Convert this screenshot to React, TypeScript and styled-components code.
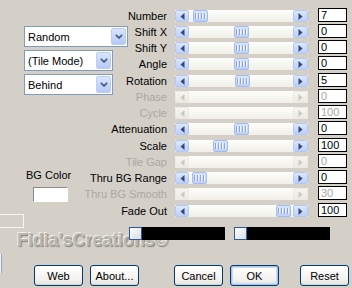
import styled, { createGlobalStyle } from "styled-components";

const GlobalStyle = createGlobalStyle`
  html, body {
    margin: 0;
    padding: 0;
    background: #d4d0c8;
  }
  body {
    width: 352px;
    height: 288px;
    overflow: hidden;
    font-family: "Liberation Sans", Arial, sans-serif;
    font-size: 11px;
    color: #000;
  }
`;

const Dialog = styled.div`
  width: 352px;
  height: 288px;
  box-sizing: border-box;
  background: #d4d0c8;
  display: flex;
  flex-direction: column;
  overflow: hidden;
`;

const ControlGrid = styled.div`
  display: grid;
  grid-template-columns: 175px 143px 29px;
  grid-template-rows: repeat(3, 16px 16px 16px 17px) 16px;
  padding-top: 8px;
`;

const Label = styled.div<{ $row: number; $off?: boolean }>`
  grid-column: 1;
  grid-row: ${(p) => p.$row};
  align-self: start;
  width: 167px;
  margin-top: 2px;
  text-align: right;
  line-height: 12px;
  font-weight: 400;
  white-space: nowrap;
  color: ${(p) => (p.$off ? "#aaa89f" : "#000")};
`;

const Track = styled.div<{ $row: number }>`
  grid-column: 2;
  grid-row: ${(p) => p.$row};
  align-self: start;
  margin-top: 2px;
  width: 133px;
  height: 12px;
  display: flex;
  background: linear-gradient(#fefefc, #f0efe8);
`;

const ArrowBtn = styled.div<{ $off?: boolean; $w: number }>`
  width: ${(p) => p.$w}px;
  height: 12px;
  box-sizing: border-box;
  border-radius: 2px;
  border: 1px solid ${(p) => (p.$off ? "#ebe9e1" : "#b4c8f4")};
  background: ${(p) =>
    p.$off
      ? "linear-gradient(#f6f5f1, #eceae2)"
      : "linear-gradient(#dde7fd, #bccff8)"};
  display: flex;
  align-items: center;
  justify-content: center;
  color: ${(p) => (p.$off ? "#cbc9bd" : "#33497a")};
`;

const TrackMiddle = styled.div`
  flex: 1;
  display: flex;
`;

const Thumb = styled.div`
  width: 15px;
  height: 12px;
  box-sizing: border-box;
  border-radius: 2px;
  border: 1px solid #a4bcef;
  background: linear-gradient(#d9e5fd, #bdd0f8);
  display: flex;
  align-items: center;
  justify-content: center;
  gap: 1px;
`;

const Grip = styled.span`
  width: 1px;
  height: 6px;
  background: #8ea6dc;
  box-shadow: 1px 0 0 #eef3fe;
  margin-right: 1px;
`;

const ValueBox = styled.div<{ $row: number; $off?: boolean }>`
  grid-column: 3;
  grid-row: ${(p) => p.$row};
  align-self: start;
  width: 29px;
  height: 14px;
  box-sizing: border-box;
  border: 1px solid #000;
  background: #fff;
  padding-left: 2px;
  line-height: 12px;
  color: ${(p) => (p.$off ? "#aaa89f" : "#000")};
`;

const LeftPanel = styled.div`
  grid-column: 1;
  grid-row: 1 / -1;
  justify-self: start;
  align-self: start;
  display: flex;
  flex-direction: column;
`;

const ComboStack = styled.div`
  display: flex;
  flex-direction: column;
  gap: 3px;
  margin: 18px 0 0 24px;
`;

const Combo = styled.div<{ $w: number }>`
  width: ${(p) => p.$w}px;
  height: 21px;
  box-sizing: border-box;
  border: 1px solid #7f9db9;
  background: #fff;
  display: flex;
  align-items: center;
  justify-content: space-between;
  padding: 1px 1px 1px 3px;
`;

const ComboArrow = styled.div`
  width: 15px;
  height: 17px;
  box-sizing: border-box;
  border-radius: 2px;
  border: 1px solid #b9cdf7;
  background: linear-gradient(#dbe6fd, #b4c9f6);
  display: flex;
  align-items: center;
  justify-content: center;
  color: #4d6185;
`;

const ColorBlock = styled.div`
  display: flex;
  flex-direction: column;
  align-items: flex-start;
  margin: 74px 0 0 26px;
`;

const ColorCaption = styled.div`
  line-height: 13px;
  white-space: nowrap;
`;

const Swatch = styled.div`
  width: 35px;
  height: 15px;
  margin: 5px 0 0 7px;
  box-sizing: border-box;
  background: #fff;
  border: 1px solid;
  border-color: #8e8c86 #fff #fff #8e8c86;
`;

const EdgeBox = styled.div`
  width: 24px;
  height: 14px;
  margin-top: 12px;
  box-sizing: border-box;
  border: 1px solid #f7f6f2;
  border-left: none;
  background: #d4d0c8;
`;

const BarsZone = styled.div`
  display: grid;
  height: 35px;
`;

const Watermark = styled.div`
  grid-area: 1 / 1;
  padding: 11px 0 0 17px;
  font-size: 18px;
  line-height: 20px;
  font-weight: bold;
  letter-spacing: -0.1px;
  white-space: nowrap;
  color: #bab8b2;
  text-shadow: -1px -1px 0 #efeeea, 1px 1px 1px #85837d;
`;

const BarsRow = styled.div`
  grid-area: 1 / 1;
  z-index: 1;
  display: flex;
  gap: 9px;
  padding: 8px 0 0 129px;
  align-self: start;
`;

const ColorBar = styled.div`
  width: 96px;
  height: 13px;
  display: flex;
`;

const BarHandle = styled.div`
  width: 13px;
  height: 13px;
  box-sizing: border-box;
  border: 1px solid #2b5c99;
  background: linear-gradient(135deg, #ffffff, #d6dde6);
`;

const BarFill = styled.div`
  flex: 1;
  background: #000;
`;

const ButtonRow = styled.div`
  display: flex;
  align-items: flex-start;
`;

const EdgeStub = styled.div`
  width: 2px;
  height: 19px;
  box-sizing: border-box;
  background: #f4f3ee;
  border-right: 1px solid #8fa6c4;
`;

const ButtonGroup = styled.div<{ $left: number }>`
  display: flex;
  gap: 7px;
  margin: 11px 0 0 ${(p) => p.$left}px;
`;

const Button = styled.button<{ $default?: boolean; $gap?: number }>`
  width: 49px;
  height: 21px;
  margin-left: ${(p) => p.$gap ?? 0}px;
  padding: 0;
  box-sizing: border-box;
  border: 1px solid #003c74;
  border-radius: 3px;
  background: linear-gradient(#ffffff, #f3f2ee 70%, #e4e2d8);
  font-family: "Liberation Sans", Arial, sans-serif;
  font-size: 11px;
  color: #000;
  box-shadow: ${(p) =>
    p.$default
      ? "inset 0 0 0 1px #a9c3ef, inset 0 0 0 2px #cddcf6"
      : "inset 0 -1px 0 #d8d5c9"};
`;

function LeftArrow() {
  return (
    <svg width="5" height="7" viewBox="0 0 5 7">
      <polygon points="4.5,0 4.5,7 0.5,3.5" fill="currentColor" />
    </svg>
  );
}

function RightArrow() {
  return (
    <svg width="5" height="7" viewBox="0 0 5 7">
      <polygon points="0.5,0 0.5,7 4.5,3.5" fill="currentColor" />
    </svg>
  );
}

function Chevron() {
  return (
    <svg width="8" height="5" viewBox="0 0 8 5">
      <polyline
        points="0.8,0.8 4,4 7.2,0.8"
        fill="none"
        stroke="currentColor"
        strokeWidth="1.8"
      />
    </svg>
  );
}

type Row = { label: string; value: string; thumb?: number; off?: boolean };

const rows: Row[] = [
  { label: "Number", value: "7", thumb: 4 },
  { label: "Shift X", value: "0", thumb: 45 },
  { label: "Shift Y", value: "0", thumb: 45 },
  { label: "Angle", value: "0", thumb: 45 },
  { label: "Rotation", value: "5", thumb: 46 },
  { label: "Phase", value: "0", off: true },
  { label: "Cycle", value: "100", off: true },
  { label: "Attenuation", value: "0", thumb: 45 },
  { label: "Scale", value: "100", thumb: 24 },
  { label: "Tile Gap", value: "0", off: true },
  { label: "Thru BG Range", value: "0", thumb: 3 },
  { label: "Thru BG Smooth", value: "30", off: true },
  { label: "Fade Out", value: "100", thumb: 87 },
];

function Slider({ row, index }: { row: Row; index: number }) {
  return (
    <Track $row={index}>
      <ArrowBtn $w={14} $off={row.off}>
        <LeftArrow />
      </ArrowBtn>
      <TrackMiddle>
        {!row.off && (
          <Thumb style={{ marginLeft: row.thumb }}>
            <Grip />
            <Grip />
            <Grip />
            <Grip />
          </Thumb>
        )}
      </TrackMiddle>
      <ArrowBtn $w={15} $off={row.off}>
        <RightArrow />
      </ArrowBtn>
    </Track>
  );
}

export default function App() {
  return (
    <>
      <GlobalStyle />
      <Dialog>
        <ControlGrid>
          {rows.map((row, i) => (
            <Label key={"l" + i} $row={i + 1} $off={row.off}>
              {row.label}
            </Label>
          ))}
          <LeftPanel>
            <ComboStack>
              <Combo $w={104}>
                Random
                <ComboArrow>
                  <Chevron />
                </ComboArrow>
              </Combo>
              <Combo $w={89}>
                (Tile Mode)
                <ComboArrow>
                  <Chevron />
                </ComboArrow>
              </Combo>
              <Combo $w={89}>
                Behind
                <ComboArrow>
                  <Chevron />
                </ComboArrow>
              </Combo>
            </ComboStack>
            <ColorBlock>
              <ColorCaption>BG Color</ColorCaption>
              <Swatch />
            </ColorBlock>
            <EdgeBox />
          </LeftPanel>
          {rows.map((row, i) => (
            <Slider key={"s" + i} row={row} index={i + 1} />
          ))}
          {rows.map((row, i) => (
            <ValueBox key={"v" + i} $row={i + 1} $off={row.off}>
              {row.value}
            </ValueBox>
          ))}
        </ControlGrid>
        <BarsZone>
          <Watermark>Fidia'sCreations©</Watermark>
          <BarsRow>
            <ColorBar>
              <BarHandle />
              <BarFill />
            </ColorBar>
            <ColorBar>
              <BarHandle />
              <BarFill />
            </ColorBar>
          </BarsRow>
        </BarsZone>
        <ButtonRow>
          <EdgeStub />
          <ButtonGroup $left={32}>
            <Button>Web</Button>
            <Button>About...</Button>
          </ButtonGroup>
          <ButtonGroup $left={35}>
            <Button>Cancel</Button>
            <Button $default>OK</Button>
            <Button $gap={14}>Reset</Button>
          </ButtonGroup>
        </ButtonRow>
      </Dialog>
    </>
  );
}
